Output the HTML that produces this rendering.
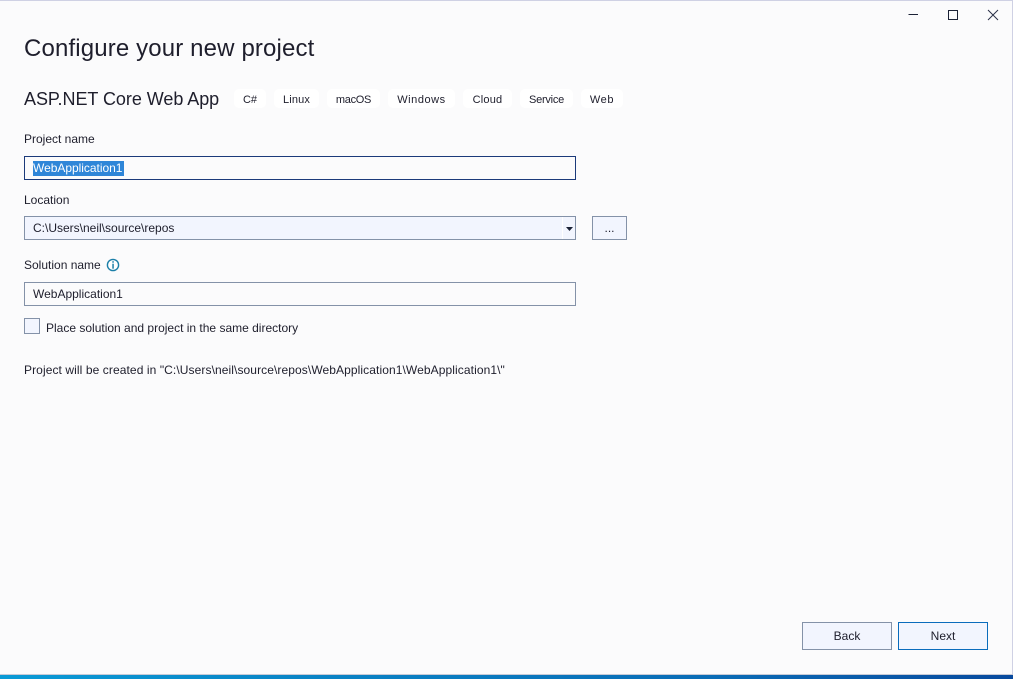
<!DOCTYPE html>
<html><head><meta charset="utf-8">
<style>
html,body{margin:0;padding:0}
body{width:1013px;height:679px;position:relative;overflow:hidden;background:#fbfbfc;font-family:"Liberation Sans",sans-serif;color:#1e1e2c;font-size:12px}
.a{position:absolute;box-sizing:border-box;white-space:nowrap}
.t{line-height:16px}
.tag{top:89px;height:19px;background:#fff;border-radius:5px;text-align:center;line-height:20px;padding-top:1px;font-size:11px}
.in{background:#fbfbfc;border:1px solid #8492a8;height:24px;left:24px;width:552px;line-height:22px;padding-left:8px}
.btn{background:#f2f5fe;border:1px solid #8492a8;text-align:center}
</style></head><body>
<div class="a" style="left:0;top:0;width:1013px;height:1px;background:#cfd1e4"></div>
<div class="a" style="left:1012px;top:0;width:1px;height:675px;background:#cfd1e4"></div>

<svg class="a" style="left:900px;top:5px" width="105" height="20" viewBox="0 0 105 20">
<path d="M8.5 9.5H18" stroke="#1b2236" stroke-width="1" fill="none"/>
<rect x="48.5" y="5.5" width="9" height="9" stroke="#1b2236" stroke-width="1" fill="none"/>
<path d="M88 5L98 15M98 5L88 15" stroke="#2a3048" stroke-width="1" fill="none"/>
</svg>

<div class="a" style="left:24px;top:34px;font-size:24px;line-height:30px;letter-spacing:.14px">Configure your new project</div>
<div class="a" style="left:24px;top:88px;font-size:18px;line-height:23px;letter-spacing:-.05px">ASP.NET Core Web App</div>

<div class="a tag" style="left:234px;width:32px">C#</div>
<div class="a tag" style="left:274px;width:45px;letter-spacing:.15px">Linux</div>
<div class="a tag" style="left:327px;width:53px;letter-spacing:-.3px">macOS</div>
<div class="a tag" style="left:388px;width:67px;letter-spacing:.55px">Windows</div>
<div class="a tag" style="left:463px;width:49px;letter-spacing:.2px">Cloud</div>
<div class="a tag" style="left:520px;width:53px;letter-spacing:-.25px">Service</div>
<div class="a tag" style="left:581px;width:42px;letter-spacing:.6px">Web</div>

<div class="a t" style="left:24px;top:131px">Project name</div>
<div class="a in" style="top:156px;border-color:#1b3a7a">
<span style="background:#2f86d8;color:#fff;display:inline-block;height:15px;line-height:15px;width:91px;letter-spacing:-.03px">WebApplication1</span></div>

<div class="a t" style="left:24px;top:192px">Location</div>
<div class="a in" style="top:216px;background:#f2f5fe">C:\Users\neil\source\repos</div>
<div class="a" style="left:562px;top:217px;width:1px;height:22px;background:#fff"></div>
<svg class="a" style="left:566px;top:227px" width="7" height="4"><path d="M0 0H7L3.5 4Z" fill="#1b2236"/></svg>
<div class="a btn" style="left:592px;top:216px;width:35px;height:24px;line-height:22px">...</div>

<div class="a t" style="left:24px;top:257px">Solution name</div>
<svg class="a" style="left:106px;top:258px" width="14" height="14" viewBox="0 0 14 14">
<circle cx="7" cy="7" r="5.6" fill="#fff" stroke="#1b7fa8" stroke-width="1.4"/>
<rect x="6.3" y="3.2" width="1.5" height="1.5" fill="#1b7fa8"/>
<rect x="6.3" y="5.7" width="1.5" height="5" fill="#1b7fa8"/>
</svg>
<div class="a in" style="top:282px">WebApplication1</div>

<div class="a" style="left:24px;top:318px;width:16px;height:16px;background:#f2f5fe;border:1px solid #8492a8"></div>
<div class="a t" style="left:46px;top:320px">Place solution and project in the same directory</div>

<div class="a t" style="left:24px;top:362px;letter-spacing:.09px">Project will be created in "C:\Users\neil\source\repos\WebApplication1\WebApplication1\"</div>

<div class="a btn" style="left:802px;top:622px;width:90px;height:28px;line-height:26px">Back</div>
<div class="a btn" style="left:898px;top:622px;width:90px;height:28px;line-height:26px;border-color:#0a6cbc">Next</div>

<div class="a" style="left:0;top:674px;width:1013px;height:1px;background:#c6cad6"></div>
<div class="a" style="left:0;top:675px;width:1013px;height:4px;background:linear-gradient(90deg,#0a9ad6 0%,#0a84c6 30%,#0a6cb6 70%,#084a9e 100%)"></div>
</body></html>
